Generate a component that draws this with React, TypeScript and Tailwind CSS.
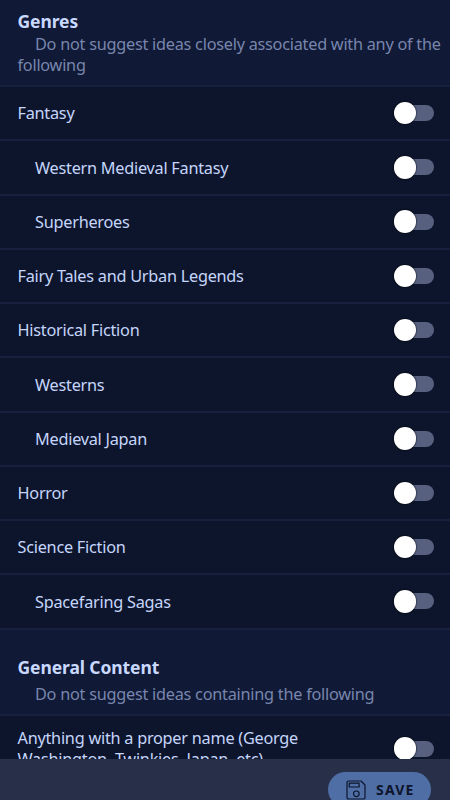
const genres: { label: string; sub?: boolean }[] = [
  { label: 'Fantasy' },
  { label: 'Western Medieval Fantasy', sub: true },
  { label: 'Superheroes', sub: true },
  { label: 'Fairy Tales and Urban Legends' },
  { label: 'Historical Fiction' },
  { label: 'Westerns', sub: true },
  { label: 'Medieval Japan', sub: true },
  { label: 'Horror' },
  { label: 'Science Fiction' },
  { label: 'Spacefaring Sagas', sub: true },
];

function Toggle({ label }: { label: string }) {
  return (
    <button
      role="switch"
      aria-checked="false"
      aria-label={label}
      className="flex h-[22.5px] w-[40px] shrink-0 items-center"
    >
      <span className="z-10 h-[22.5px] w-[22.5px] shrink-0 rounded-full bg-white shadow-[0_0_1px_1px_rgba(0,0,0,0.35)]" />
      <span className="-ml-[20px] h-4 w-[37.5px] shrink-0 rounded-full bg-[#57607f]" />
    </button>
  );
}

function Row({ label, sub }: { label: string; sub?: boolean }) {
  return (
    <li
      className={`flex h-[54.25px] items-center justify-between border-b-2 border-[#17213d] pr-[16.3px] ${sub ? 'pl-[35px]' : 'pl-[17.5px]'}`}
    >
      <span className="pt-[2px]">{label}</span>
      <Toggle label={label} />
    </li>
  );
}

function SaveIcon() {
  return (
    <svg width="20" height="20" viewBox="0 0 20 20" fill="none" stroke="#0d152c" strokeWidth="1.2" strokeLinejoin="round">
      <path d="M2.6 1H15L19 5V17.4a1.6 1.6 0 0 1-1.6 1.6H2.6A1.6 1.6 0 0 1 1 17.4V2.6A1.6 1.6 0 0 1 2.6 1Z" />
      <rect x="3.3" y="3.2" width="9.8" height="3.8" />
      <circle cx="10.3" cy="13.8" r="2.8" />
    </svg>
  );
}

export default function App() {
  return (
    <div className="flex h-[800px] w-[450px] flex-col overflow-hidden bg-[#0d152c] font-['Noto_Sans',sans-serif] text-[16.27px] leading-[21.7px] tracking-[-0.25px] text-[#c5d5fb]">
      <main className="min-h-0 flex-1 overflow-hidden">
        <header className="h-[87px] border-b-2 border-[#17213d] bg-[#101935] pl-[17.5px] pr-2 pt-[9px]">
          <h2 className="text-[17.5px] font-bold leading-[24px] tracking-[-0.1px] text-[#c8d8ff]">Genres</h2>
          <p className="pt-px indent-[17.5px] leading-[21.4px] text-[#7886ae]">
            Do not suggest ideas closely associated with any of the following
          </p>
        </header>
        <ul>
          {genres.map((genre) => (
            <Row key={genre.label} {...genre} />
          ))}
        </ul>
        <header className="h-[86px] border-b-2 border-[#17213d] bg-[#101935] pl-[17.5px] pt-[25px]">
          <h2 className="text-[17.5px] font-bold leading-[24px] tracking-[-0.1px] text-[#c8d8ff]">General Content</h2>
          <p className="mt-[5px] indent-[17.5px] text-[#7886ae]">Do not suggest ideas containing the following</p>
        </header>
        <div className="flex h-[66px] items-center justify-between pl-[17.5px] pr-[16.3px]">
          <span className="w-[310px] pt-px leading-[21.2px]">
            Anything with a proper name (George Washington, Twinkies, Japan, etc)
          </span>
          <Toggle label="Proper names" />
        </div>
      </main>
      <footer className="flex h-[41px] shrink-0 items-start justify-end overflow-hidden bg-[#282f48] pr-[19px] pt-[13px]">
        <button className="flex h-[35px] w-[103px] shrink-0 items-center gap-[10px] rounded-full bg-[#4e6ea5] pl-[18px] text-[14px] font-bold tracking-[1.2px] text-[#0d152c]">
          <SaveIcon />
          <span>SAVE</span>
        </button>
      </footer>
    </div>
  );
}
